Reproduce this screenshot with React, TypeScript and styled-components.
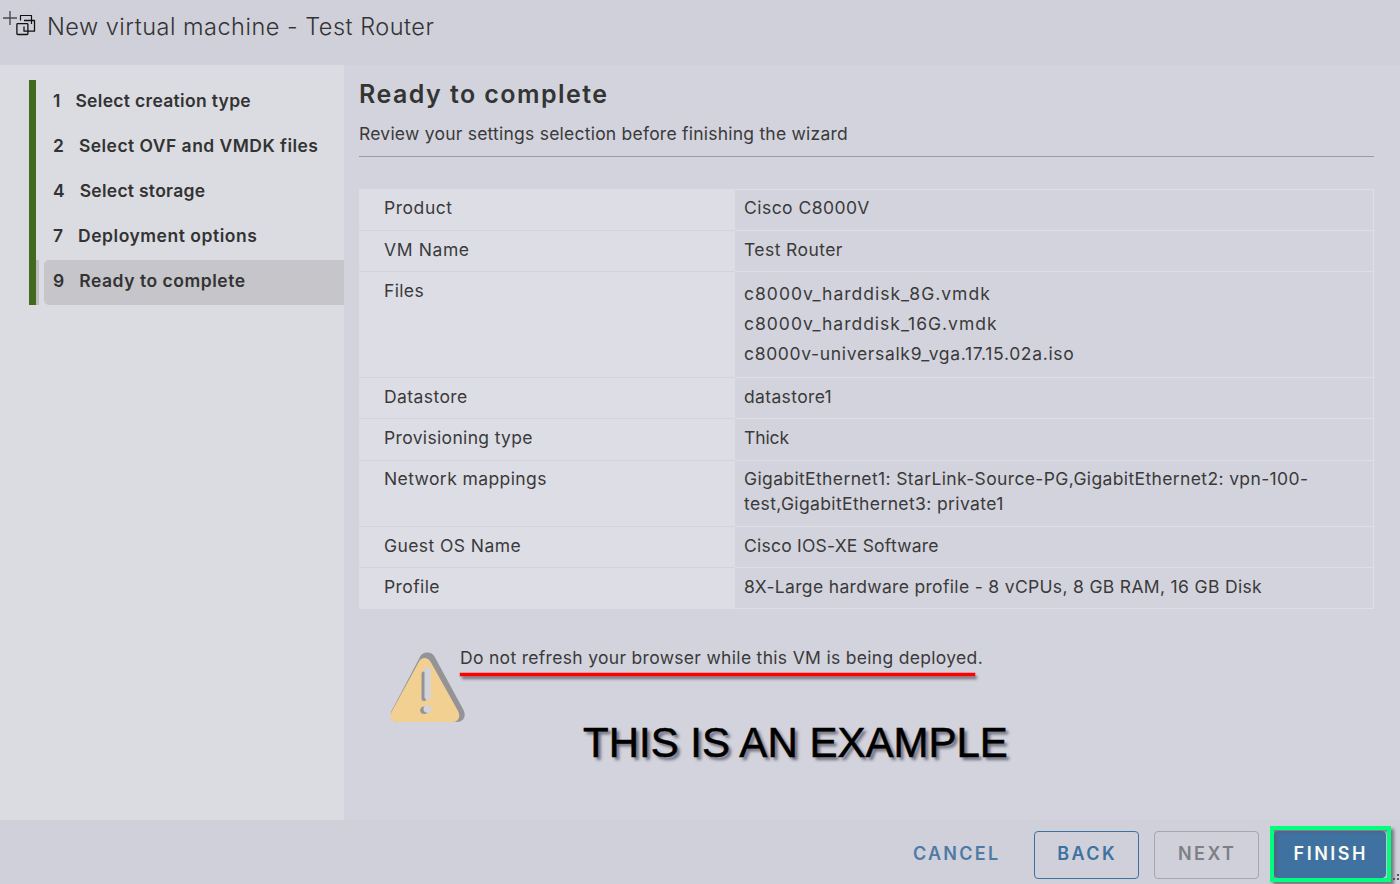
import React from "react";
import styled, { createGlobalStyle } from "styled-components";

const GlobalStyle = createGlobalStyle`
  * { box-sizing: border-box; }
  body {
    margin: 0;
    background: #d3d3dd;
    font-family: Inter, "Liberation Sans", sans-serif;
    font-size: 17.5px;
    line-height: 25px;
    color: #3a3a3a;
  }
`;

const Wizard = styled.div`
  display: grid;
  grid-template: 65px 755px 64px / 344px 1fr;
  width: 1400px;
  height: 884px;
  overflow: hidden;
`;

const Header = styled.header`
  grid-column: 1 / -1;
  display: flex;
  align-items: flex-start;
  padding: 10px 0 0 3px;
  background: #d0d0da;
`;

const HeaderIcon = styled.svg`
  width: 34px;
  height: 26px;
  margin-right: 10px;
`;

const WizardTitle = styled.h1`
  margin: 0;
  font-size: 23.5px;
  font-weight: 300;
  line-height: 34px;
  letter-spacing: 0.5px;
  white-space: nowrap;
  color: #333;
`;

const Sidebar = styled.nav`
  padding: 15px 0 0 29px;
  background: #dbdce1;
`;

const StepList = styled.ol`
  margin: 0;
  padding: 0;
  list-style: none;
  border-left: 7px solid #42691d;
`;

const Step = styled.li<{ $active?: boolean }>`
  display: flex;
  height: 45px;
  padding-left: ${(p) => (p.$active ? 5 : 8)}px;
  border-left: ${(p) => (p.$active ? "3px solid #bcbcc3" : "none")};
`;

const StepLabel = styled.div<{ $active?: boolean; $spacing: number }>`
  flex: 1;
  display: flex;
  gap: 15px;
  padding: 8px 0 0 9px;
  border-radius: 5px 0 0 5px;
  background: ${(p) => (p.$active ? "#c5c5ca" : "transparent")};
  font-weight: 600;
  letter-spacing: ${(p) => p.$spacing}px;
  white-space: nowrap;
  color: #333;
`;

const StepNumber = styled.span`
  letter-spacing: 0;
`;

const Content = styled.main`
  padding: 12px 26px 0 15px;
  background: #d3d3dd;
`;

const PageTitle = styled.h2`
  margin: 0;
  font-size: 25px;
  font-weight: 600;
  line-height: 34px;
  letter-spacing: 1.45px;
  color: #333533;
`;

const PageIntro = styled.p`
  height: 46px;
  margin: 0 0 32px;
  padding-top: 10px;
  border-bottom: 1px solid #9a9aa5;
  letter-spacing: 0.23px;
`;

const SettingsTable = styled.dl`
  margin: 0;
  border-top: 1px solid #dedee6;
  border-right: 1px solid #dedee6;
`;

const SettingsRow = styled.div<{ $height: number }>`
  display: grid;
  grid-template-columns: 376px 1fr;
  height: ${(p) => p.$height}px;
`;

const Label = styled.dt<{ $spacing: number; $top: number }>`
  padding: ${(p) => p.$top}px 0 0 25px;
  border-bottom: 1px solid #d3d3db;
  background: #dddde6;
  letter-spacing: ${(p) => p.$spacing}px;

  ${SettingsRow}:last-child & {
    border-bottom-color: #dddde6;
  }
`;

const Value = styled.dd<{ $list?: boolean; $top: number }>`
  margin: 0;
  padding: ${(p) => (p.$list ? 7 : p.$top)}px 0 0 9px;
  border-bottom: 1px solid #dedee6;
  line-height: ${(p) => (p.$list ? 30 : 25)}px;
`;

const Line = styled.div<{ $spacing: number }>`
  letter-spacing: ${(p) => p.$spacing}px;
  white-space: nowrap;
`;

const Notice = styled.section`
  display: flex;
  align-items: flex-start;
  padding: 36px 0 0 30px;
`;

const WarningIcon = styled.svg`
  width: 76px;
  height: 72px;
  margin: 7px -5px 0 0;
`;

const NoticeText = styled.p`
  margin: 0;
  letter-spacing: 0.31px;
  white-space: nowrap;

  &::after {
    content: "";
    display: block;
    width: 515px;
    height: 3px;
    margin-top: 3px;
    background: #f00;
    box-shadow: 0 0 0 0.5px rgba(255, 0, 0, 0.5), 2px 3px 3px rgba(40, 40, 50, 0.6);
  }
`;

const Caption = styled.p`
  margin: -1px 0 0 224px;
  font: 42px / 40px "Liberation Sans", Arial, sans-serif;
  letter-spacing: 0;
  color: #000;
  -webkit-text-stroke: 0.6px #000;
  text-shadow: 3px 3px 3px rgba(50, 50, 70, 0.65);
`;

const Footer = styled.footer`
  position: relative;
  grid-column: 1 / -1;
  display: flex;
  justify-content: flex-end;
  align-items: flex-start;
  padding: 6px 9px 0 0;
  background: #d0d0da;
`;

const buttonColors = {
  link: { text: "#4f7aa5", border: "transparent", fill: "transparent" },
  outline: { text: "#3d71a0", border: "#3d71a0", fill: "transparent" },
  disabled: { text: "#7f7f86", border: "#a6a6ae", fill: "transparent" },
  primary: { text: "#fafaf0", border: "#3f72a1", fill: "#3f72a1" },
};

const Button = styled.button<{ $kind: keyof typeof buttonColors; $spacing: number }>`
  width: ${(p) => (p.$kind === "link" ? 132 : p.$kind === "primary" ? 112 : 105)}px;
  height: ${(p) => (p.$kind === "primary" ? 47 : 48)}px;
  margin: ${(p) => (p.$kind === "primary" ? "1px 0 0" : "5px 0 0")};
  margin-right: ${(p) => (p.$kind === "link" ? 12 : p.$kind === "outline" ? 15 : p.$kind === "disabled" ? 11 : 0)}px;
  padding: 0 0 ${(p) => (p.$kind === "primary" ? 2 : 4)}px ${(p) => p.$spacing - 1}px;
  border: 1px solid ${(p) => buttonColors[p.$kind].border};
  border-radius: 4px;
  background: ${(p) => buttonColors[p.$kind].fill};
  color: ${(p) => buttonColors[p.$kind].text};
  font: 600 18px Inter, sans-serif;
  letter-spacing: ${(p) => p.$spacing}px;
`;

const Highlight = styled.div`
  position: relative;
  display: flex;
  width: 121px;
  height: 56px;
  border: 4px solid #00ff7f;
  background: #c9c9d1;
  box-shadow: 3px 3px 3px rgba(60, 60, 70, 0.6);

  &::after {
    content: "";
    position: absolute;
    inset: 0;
    box-shadow: inset 2px 2px 3px rgba(90, 90, 105, 0.75);
  }
`;

const ResizeGrip = styled.svg`
  position: absolute;
  right: 0;
  bottom: 2px;
  width: 7px;
  height: 8px;
`;

const steps = [
  { n: 1, label: "Select creation type", spacing: 0.31 },
  { n: 2, label: "Select OVF and VMDK files", spacing: 0.46 },
  { n: 4, label: "Select storage", spacing: 0.27 },
  { n: 7, label: "Deployment options", spacing: 0.52 },
  { n: 9, label: "Ready to complete", spacing: 0.53, active: true },
];

type Setting = {
  label: string;
  spacing: number;
  height: number;
  top: number;
  list?: boolean;
  lines: [string, number][];
};

const settings: Setting[] = [
  { label: "Product", spacing: 0.55, height: 41, top: 5, lines: [["Cisco C8000V", 0.46]] },
  { label: "VM Name", spacing: 0.62, height: 41, top: 6, lines: [["Test Router", 0.42]] },
  {
    label: "Files",
    spacing: 0.35,
    height: 106,
    top: 6,
    list: true,
    lines: [
      ["c8000v_harddisk_8G.vmdk", 1.01],
      ["c8000v_harddisk_16G.vmdk", 1],
      ["c8000v-universalk9_vga.17.15.02a.iso", 0.67],
    ],
  },
  { label: "Datastore", spacing: 0.42, height: 41, top: 6, lines: [["datastore1", 0.36]] },
  { label: "Provisioning type", spacing: 0.34, height: 42, top: 6, lines: [["Thick", -0.12]] },
  {
    label: "Network mappings",
    spacing: 0.4,
    height: 66,
    top: 5,
    lines: [
      ["GigabitEthernet1: StarLink-Source-PG,GigabitEthernet2: vpn-100-", 0.37],
      ["test,GigabitEthernet3: private1", 0.38],
    ],
  },
  { label: "Guest OS Name", spacing: 0.42, height: 41, top: 6, lines: [["Cisco IOS-XE Software", 0.22]] },
  {
    label: "Profile",
    spacing: 0.4,
    height: 41,
    top: 6,
    lines: [["8X-Large hardware profile - 8 vCPUs, 8 GB RAM, 16 GB Disk", 0.33]],
  },
];

export default function App() {
  return (
    <>
      <GlobalStyle />
      <Wizard>
        <Header>
          <HeaderIcon viewBox="0 0 34 26" fill="none">
            <path d="M0 8H14M7 1V15" stroke="#4a4a4e" strokeWidth="1.4" />
            <path d="M17.5 10.5V5.5H28.5V14" stroke="#111" strokeWidth="1.2" strokeLinejoin="round" />
            <rect x="13.900" y="13.700" width="11" height="10.800" rx="0.800" stroke="#111" strokeWidth="1.300" />
            <path d="M21 10.500H31.500V21.200H21V16.500" stroke="#111" strokeWidth="1.300" strokeLinejoin="round" />
          </HeaderIcon>
          <WizardTitle>New virtual machine - Test Router</WizardTitle>
        </Header>

        <Sidebar>
          <StepList>
            {steps.map((s) => (
              <Step key={s.n} $active={s.active}>
                <StepLabel $active={s.active} $spacing={s.spacing}>
                  <StepNumber>{s.n}</StepNumber>
                  <span>{s.label}</span>
                </StepLabel>
              </Step>
            ))}
          </StepList>
        </Sidebar>

        <Content>
          <PageTitle>Ready to complete</PageTitle>
          <PageIntro>Review your settings selection before finishing the wizard</PageIntro>
          <SettingsTable>
            {settings.map((row) => (
              <SettingsRow key={row.label} $height={row.height}>
                <Label $spacing={row.spacing} $top={row.top}>
                  {row.label}
                </Label>
                <Value $list={row.list} $top={row.top}>
                  {row.lines.map(([text, spacing]) => (
                    <Line key={text} $spacing={spacing}>
                      {text}
                    </Line>
                  ))}
                </Value>
              </SettingsRow>
            ))}
          </SettingsTable>
          <Notice>
            <WarningIcon viewBox="0 0 76 72">
              <path
                d="M31.5 4Q33.5 0.5 38.3 0.5Q43 0.5 45.5 4.5L74.5 58Q77.5 64 73.5 68Q71.5 70 68 70H8Q1 69 2 60Z"
                fill="#939398"
              />
              <path
                d="M29.5 10.5Q31.5 6 35.5 6Q39.5 6 42 10.5L69 59Q71.5 64 69 67.5Q67.5 70 64 70H8Q4 70 2.3 67Q0.5 63.5 3 59Z"
                fill="#f2d091"
              />
              <rect x="32.5" y="19.5" width="5" height="29.5" rx="2.3" fill="#939398" />
              <rect x="35.5" y="15" width="6.2" height="32.5" rx="2.8" fill="#d3d3dd" />
              <ellipse cx="35.3" cy="58.2" rx="4.1" ry="3.8" fill="#939398" />
              <ellipse cx="38.5" cy="57" rx="4" ry="3.7" fill="#d3d3dd" />
            </WarningIcon>
            <NoticeText>Do not refresh your browser while this VM is being deployed.</NoticeText>
          </Notice>
          <Caption>THIS IS AN EXAMPLE</Caption>
        </Content>

        <Footer>
          <Button $kind="link" $spacing={2.25}>CANCEL</Button>
          <Button $kind="outline" $spacing={2.4}>BACK</Button>
          <Button $kind="disabled" $spacing={2.4} disabled>NEXT</Button>
          <Highlight>
            <Button $kind="primary" $spacing={2.5}>FINISH</Button>
          </Highlight>
          <ResizeGrip viewBox="0 0 7 8" fill="#55555d">
            <rect x="4" y="0" width="2" height="2" />
            <rect x="4" y="4" width="2" height="2" />
            <rect x="0" y="4" width="2" height="2" />
          </ResizeGrip>
        </Footer>
      </Wizard>
    </>
  );
}
